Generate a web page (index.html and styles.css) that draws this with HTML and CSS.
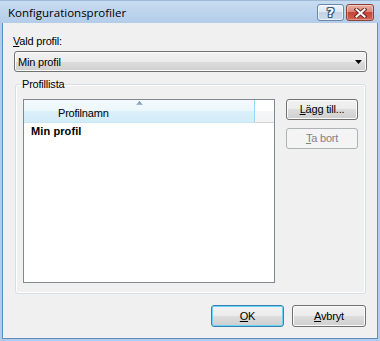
FILE: index.html
```html
<!DOCTYPE html>
<html lang="sv">
<head>
<meta charset="utf-8">
<title>Konfigurationsprofiler</title>
<link rel="stylesheet" href="styles.css">
</head>
<body>
<div class="window">
  <div class="titlebar">
    <span class="title">Konfigurationsprofiler</span>
    <div class="caption-btns">
      <span class="cbtn help">?</span>
      <span class="cbtn close">
        <svg width="13" height="10" viewBox="0 0 13 10">
          <path d="M2.5 1.5 L10.5 8.5 M10.5 1.5 L2.5 8.5" stroke="#6b2620" stroke-width="4" stroke-linecap="square" fill="none"/>
          <path d="M2.5 1.5 L10.5 8.5 M10.5 1.5 L2.5 8.5" stroke="#ffffff" stroke-width="2" stroke-linecap="square" fill="none"/>
        </svg>
      </span>
    </div>
  </div>
  <div class="client">
    <label class="lbl"><u>V</u>ald profil:</label>
    <div class="combo">
      <span class="combo-text">Min profil</span>
      <svg class="combo-arrow" width="7" height="4" viewBox="0 0 7 4"><path d="M0 0 H7 L3.5 4 Z" fill="#000"/></svg>
    </div>
    <fieldset class="group">
      <legend>Profillista</legend>
      <div class="group-body">
        <div class="listview">
          <div class="lv-header">
            <div class="lv-col">
              <svg class="sort" width="7" height="4" viewBox="0 0 7 4">
                <defs><linearGradient id="sg" x1="0" y1="0" x2="0" y2="1"><stop offset="0" stop-color="#5d7ea8"/><stop offset="1" stop-color="#a9c0da"/></linearGradient></defs>
                <path d="M3.5 0 L7 4 H0 Z" fill="url(#sg)"/>
              </svg>
              <span class="lv-col-text">Profilnamn</span>
            </div>
            <div class="lv-fill"></div>
          </div>
          <div class="lv-row">Min profil</div>
        </div>
        <div class="side-btns">
          <button class="btn"><u>L</u>ägg till...</button>
          <button class="btn" disabled><u>T</u>a bort</button>
        </div>
      </div>
    </fieldset>
    <div class="footer">
      <button class="btn default ok"><u>O</u>K</button>
      <button class="btn cancel"><u>A</u>vbryt</button>
    </div>
  </div>
</div>
</body>
</html>
```

FILE: styles.css
```css
html, body {
  margin: 0;
  padding: 0;
}
body {
  width: 380px;
  height: 341px;
  overflow: hidden;
  background: #b1cdeb;
}
.window {
  width: 380px;
  height: 341px;
  box-sizing: border-box;
  padding: 0 2px 2px;
  background: #b1cdeb;
  display: flex;
  flex-direction: column;
  font-family: "Liberation Sans", Arial, sans-serif;
  font-size: 11px;
  letter-spacing: -0.2px;
  color: #000;
}
.titlebar {
  flex: 0 0 23px;
  height: 23px;
  margin: 0 -2px;
  box-sizing: border-box;
  display: flex;
  align-items: center;
  padding-left: 8px;
  background: linear-gradient(#c8dcf1, #b3cce8);
  border-top: 1px solid #9fb9d6;
}
.title {
  font-family: "Open Sans", "Liberation Sans", sans-serif;
  font-size: 11.5px;
  letter-spacing: 0;
  color: #000;
  flex: 1;
  line-height: 16px;
  margin-top: 1px;
}
.caption-btns {
  display: flex;
  gap: 2px;
  margin-right: 6px;
  margin-top: 1px;
}
.cbtn {
  box-sizing: border-box;
  height: 17px;
  border-radius: 3px;
  display: flex;
  align-items: center;
  justify-content: center;
}
.help {
  width: 27px;
  border: 1px solid #6a86a8;
  background: linear-gradient(#eef3f9 0%, #dce6f1 50%, #c3d3e5 50%, #ccdbeb 100%);
  box-shadow: inset 0 0 0 1px rgba(255,255,255,0.6);
  font-family: "DejaVu Sans", sans-serif;
  font-weight: bold;
  font-size: 13px;
  letter-spacing: 0;
  color: #ffffff;
  line-height: 14px;
  text-shadow: 1px 0 0 #3b5573, -1px 0 0 #3b5573, 0 1px 0 #3b5573, 0 -1px 0 #3b5573, 1px 1px 0 #3b5573, -1px -1px 0 #3b5573, 1px -1px 0 #3b5573, -1px 1px 0 #3b5573;
}
.close {
  width: 28px;
  border: 1px solid #8e4037;
  background: linear-gradient(#eab0a6 0%, #d98072 50%, #c5473a 50%, #d15f50 100%);
  box-shadow: inset 0 0 0 1px rgba(255,255,255,0.35);
}
.client {
  flex: 1;
  background: #f0f0f0;
  border: 1px solid #5b8fc4;
  border-top: none;
  padding: 12px 10px 0 11px;
  display: flex;
  flex-direction: column;
}
.lbl {
  display: block;
  line-height: 13px;
  margin-left: -1px;
}
.combo {
  margin-top: 3px;
  height: 21px;
  box-sizing: border-box;
  border: 1px solid #707070;
  border-radius: 3px;
  background: linear-gradient(#f2f2f2 0%, #ebebeb 50%, #dddddd 50%, #cfcfcf 100%);
  box-shadow: inset 0 0 0 1px #fbfbfb;
  display: flex;
  align-items: center;
  padding: 0 4px 0 3px;
}
.combo-text {
  flex: 1;
  line-height: 13px;
  margin-top: 1px;
}
.combo-arrow {
  display: block;
  margin-top: 1px;
}
.group {
  margin: 6px 1px 0 1px;
  padding: 9px 7px 10px 7px;
  border: 1px solid #d5dfe5;
  border-radius: 3px;
  min-width: 0;
  box-shadow: inset 0 0 0 1px #ffffff;
}
.group legend {
  padding: 0 1px;
  margin-left: -2px;
  line-height: 12px;
}
.group-body {
  display: flex;
  align-items: flex-start;
  gap: 11px;
}
.listview {
  flex: 0 0 252px;
  height: 184px;
  box-sizing: border-box;
  border: 1px solid #828790;
  background: #ffffff;
}
.lv-header {
  display: flex;
  height: 23px;
}
.lv-col {
  flex: 0 0 231px;
  box-sizing: border-box;
  border-right: 1px solid #96d9f9;
  border-bottom: 1px solid #c8e6f5;
  background: linear-gradient(#f3fafd 0%, #ecf7fc 48%, #dbf0fa 48%, #d3ecf8 100%);
  display: flex;
  flex-direction: column;
}
.sort {
  display: block;
  align-self: center;
  margin-top: 1px;
}
.lv-col-text {
  padding-left: 34px;
  line-height: 13px;
  margin-top: 2px;
}
.lv-fill {
  flex: 1;
  box-sizing: border-box;
  background: linear-gradient(#ffffff 0%, #ffffff 48%, #f6f7f8 48%, #f2f3f4 100%);
  border-bottom: 1px solid #d5d5d5;
}
.lv-row {
  font-weight: bold;
  letter-spacing: 0.1px;
  line-height: 17px;
  padding-left: 7px;
}
.side-btns {
  flex: 0 0 72px;
  display: flex;
  flex-direction: column;
  gap: 8px;
}
.btn {
  font-family: inherit;
  font-size: 11px;
  letter-spacing: -0.2px;
  color: #000;
  height: 21px;
  box-sizing: border-box;
  padding: 0;
  border: 1px solid #707070;
  border-radius: 3px;
  background: linear-gradient(#f2f2f2 0%, #ebebeb 50%, #dddddd 50%, #cfcfcf 100%);
  box-shadow: inset 0 0 0 1px #fbfbfb;
  line-height: 13px;
}
.btn:disabled {
  color: #838383;
  border-color: #adb2b5;
  background: #f4f4f4;
  box-shadow: none;
}
.footer {
  display: flex;
  justify-content: flex-end;
  gap: 8px;
  margin-top: 11px;
  margin-right: 1px;
}
.ok {
  width: 73px;
  height: 22px;
}
.cancel {
  width: 74px;
  height: 22px;
}
.default {
  border-color: #3c7fb1;
  box-shadow: inset 0 0 0 1px #6ad4f7;
}
```
